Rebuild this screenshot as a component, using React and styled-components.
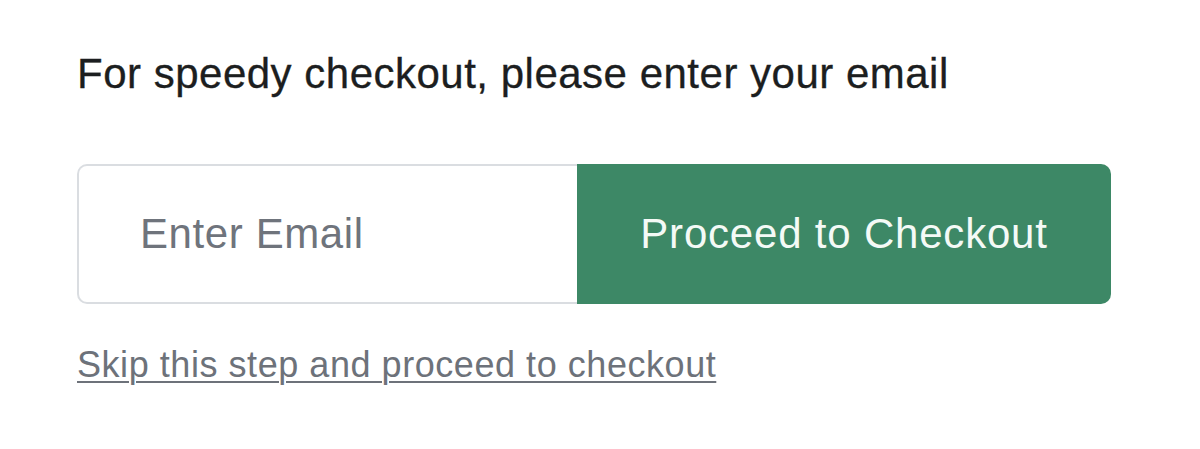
import React from "react";
import styled, { createGlobalStyle } from "styled-components";

const Global = createGlobalStyle`
  html, body { margin: 0; padding: 0; background: #ffffff; }
  body { font-family: "Liberation Sans", Arial, sans-serif; }
`;

const Page = styled.div`
  width: 1200px;
  height: 449px;
  box-sizing: border-box;
  padding: 50px 0 0 77px;
  display: flex;
  flex-direction: column;
  align-items: flex-start;
`;

const Heading = styled.h2`
  margin: 0;
  font-size: 42px;
  line-height: 48px;
  font-weight: 400;
  color: #1c1e20;
  letter-spacing: 0.5px;
  -webkit-text-stroke: 0.3px #1c1e20;
`;

const Form = styled.form`
  margin-top: 66px;
  display: flex;
  width: 1034px;
  height: 140px;
`;

const EmailInput = styled.input`
  box-sizing: border-box;
  width: 500px;
  height: 100%;
  border: 2px solid #dadde1;
  border-right: none;
  border-radius: 10px 0 0 10px;
  padding: 0 0 0 61px;
  font-family: "Liberation Sans", Arial, sans-serif;
  font-size: 42px;
  letter-spacing: 0.6px;
  color: #222;
  background: #fff;
  outline: none;
  &::placeholder { color: #6f747c; }
`;

const SubmitButton = styled.button`
  flex: 1;
  height: 100%;
  border: none;
  border-radius: 0 10px 10px 0;
  background: #3d8866;
  color: #f4faf6;
  font-family: "Liberation Sans", Arial, sans-serif;
  font-size: 42px;
  line-height: 48px;
  letter-spacing: 0.8px;
  padding: 0;
  cursor: pointer;
`;

const SkipLink = styled.a`
  margin-top: 40px;
  font-size: 36px;
  line-height: 42px;
  color: #6d727a;
  text-decoration: underline;
  text-decoration-thickness: 2px;
  text-underline-offset: 4px;
  letter-spacing: 0.55px;
  cursor: pointer;
`;

export default function App() {
  return (
    <>
      <Global />
      <Page>
        <Heading>For speedy checkout, please enter your email</Heading>
        <Form onSubmit={(e) => e.preventDefault()}>
          <EmailInput type="email" placeholder="Enter Email" />
          <SubmitButton type="submit">Proceed to Checkout</SubmitButton>
        </Form>
        <SkipLink href="#">Skip this step and proceed to checkout</SkipLink>
      </Page>
    </>
  );
}
